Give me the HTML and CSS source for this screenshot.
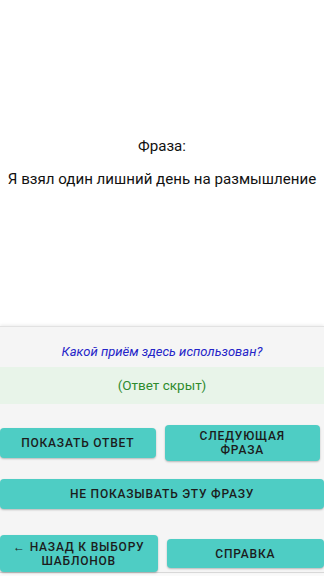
FILE: index.html
```html
<!DOCTYPE html>
<html lang="ru">
<head>
  <meta charset="UTF-8" />
  <meta name="viewport" content="width=device-width, initial-scale=1.0" />
  <title>Фраза</title>
  <link rel="stylesheet" href="styles.css">
</head>
<body>
  <div class="phrase-area">
    <p class="label">Фраза:</p>
    <p class="phrase">Я взял один лишний день на размышление</p>
  </div>

  <div class="panel">
    <p class="question">Какой приём здесь использован?</p>
    <div class="answer">(Ответ скрыт)</div>

    <div class="row row-top">
      <button class="btn btn-short">Показать ответ</button>
      <button class="btn btn-tall">Следующая<br>фраза</button>
    </div>

    <div class="row row-wide">
      <button class="btn btn-full">Не показывать эту фразу</button>
    </div>

    <div class="row row-bottom">
      <button class="btn btn-back">&larr; Назад к выбору<br>шаблонов</button>
      <button class="btn btn-help">Справка</button>
    </div>
  </div>
</body>
</html>
```

FILE: styles.css
```css
html, body {
  margin: 0;
  padding: 0;
}
body {
  font-family: Roboto, 'Noto Sans', sans-serif;
  background-color: #fafafa;
  width: 324px;
  height: 576px;
  overflow: hidden;
  display: flex;
  flex-direction: column;
}

/* верхняя часть с фразой */
.phrase-area {
  height: 326px;
  background: #fff;
  display: flex;
  flex-direction: column;
  justify-content: center;
  align-items: center;
  text-align: center;
  color: #111;
  font-size: 15.1px;
  white-space: nowrap;
  padding-bottom: 2px;
  box-sizing: border-box;
}
.phrase-area p {
  margin: 0;
}
.label {
  margin-bottom: 15px !important;
}

/* нижняя панель */
.panel {
  height: 245px;
  background: #f5f5f5;
  border-top: 1px solid #e2e2e2;
  box-shadow: 0 -1px 3px rgba(0, 0, 0, 0.08);
  border-bottom: 1px solid #d8d8d8;
  display: flex;
  flex-direction: column;
}
.question {
  margin: 16px 0 0;
  height: 18px;
  line-height: 18px;
  text-align: center;
  font-style: italic;
  font-size: 13px;
  color: #2424c8;
}
.answer {
  margin-top: 6px;
  height: 37px;
  line-height: 37px;
  background: #e8f4e9;
  text-align: center;
  font-size: 13.5px;
  color: #2e8b2e;
}

.row {
  display: flex;
  gap: 9px;
  align-items: center;
}
.row-top {
  margin-top: 21px;
  padding-right: 4px;
  height: 36px;
}
.row-wide {
  margin-top: 18px;
}
.row-bottom {
  margin-top: 26px;
  height: 37px;
}

.btn {
  flex: 1;
  border: none;
  border-radius: 4px;
  background-color: #4ecdc4;
  color: #1c1c1c;
  font-family: Roboto, 'Noto Sans', sans-serif;
  font-weight: 500;
  font-size: 12px;
  letter-spacing: 0.8px;
  line-height: 14px;
  text-transform: uppercase;
  box-shadow: 0 1px 2px rgba(0, 0, 0, 0.25);
  padding: 0 8px;
  cursor: pointer;
}
.btn-short {
  height: 30px;
}
.btn-tall {
  height: 36px;
}
.btn-full {
  height: 30px;
}
.btn-back {
  height: 37px;
}
.btn-help {
  height: 29px;
}
```
